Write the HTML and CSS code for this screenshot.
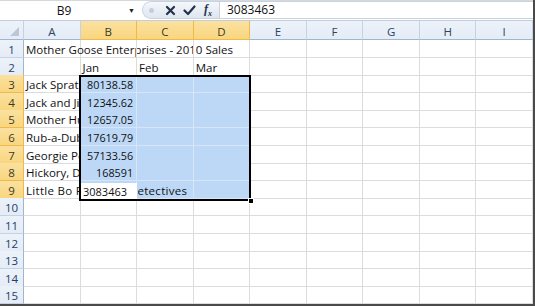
FILE: index.html
```html
<!DOCTYPE html>
<html lang="en">
<head>
    <meta charset="utf-8">
    <title>Mother Goose Enterprises - 2010 Sales</title>
    <link rel="stylesheet" href="styles.css">
</head>
<body>
    <div class="window">
        <div class="formula-bar">
            <div class="name-box">
                <span class="name">B9</span>
                <span class="drop">&#9660;</span>
            </div>
            <div class="fx-buttons">
                <span class="grip"></span>
                <svg class="btn-icon" width="11" height="11" viewBox="0 0 11 11">
                    <path d="M2 2 L9 9 M9 2 L2 9" stroke="#23324d" stroke-width="2.2" stroke-linecap="round"/>
                </svg>
                <svg class="btn-icon" width="13" height="11" viewBox="0 0 13 11">
                    <path d="M1.5 5.5 L5 9 L11.5 1.5" stroke="#23324d" stroke-width="2.2" fill="none" stroke-linecap="round" stroke-linejoin="round"/>
                </svg>
                <span class="fx">f<sub>x</sub></span>
            </div>
            <div class="formula-input">3083463</div>
        </div>

        <div class="sheet">
            <div class="row head-row">
                <div class="corner"><span class="corner-tri"></span></div>
                <div class="col-head">A</div>
                <div class="col-head active">B</div>
                <div class="col-head active">C</div>
                <div class="col-head active">D</div>
                <div class="col-head">E</div>
                <div class="col-head">F</div>
                <div class="col-head">G</div>
                <div class="col-head">H</div>
                <div class="col-head">I</div>
            </div>

            <div class="row">
                <div class="row-head">1</div>
                <div class="cell spill">Mother Goose Enterprises - 2010 Sales</div>
                <div class="cell"></div><div class="cell"></div><div class="cell"></div>
                <div class="cell"></div><div class="cell"></div><div class="cell"></div><div class="cell"></div><div class="cell"></div>
            </div>
            <div class="row">
                <div class="row-head">2</div>
                <div class="cell"></div>
                <div class="cell">Jan</div>
                <div class="cell">Feb</div>
                <div class="cell">Mar</div>
                <div class="cell"></div><div class="cell"></div><div class="cell"></div><div class="cell"></div><div class="cell"></div>
            </div>
            <div class="row">
                <div class="row-head active">3</div>
                <div class="cell">Jack Sprat Diet Centers</div>
                <div class="cell sel num">80138.58</div>
                <div class="cell sel"></div><div class="cell sel"></div>
                <div class="cell"></div><div class="cell"></div><div class="cell"></div><div class="cell"></div><div class="cell"></div>
            </div>
            <div class="row">
                <div class="row-head active">4</div>
                <div class="cell">Jack and Jill Trauma Centers</div>
                <div class="cell sel num">12345.62</div>
                <div class="cell sel"></div><div class="cell sel"></div>
                <div class="cell"></div><div class="cell"></div><div class="cell"></div><div class="cell"></div><div class="cell"></div>
            </div>
            <div class="row">
                <div class="row-head active">5</div>
                <div class="cell">Mother Hubbard Dog Goodies</div>
                <div class="cell sel num">12657.05</div>
                <div class="cell sel"></div><div class="cell sel"></div>
                <div class="cell"></div><div class="cell"></div><div class="cell"></div><div class="cell"></div><div class="cell"></div>
            </div>
            <div class="row">
                <div class="row-head active">6</div>
                <div class="cell">Rub-a-Dub-Dub Hot Tubs and Spas</div>
                <div class="cell sel num">17619.79</div>
                <div class="cell sel"></div><div class="cell sel"></div>
                <div class="cell"></div><div class="cell"></div><div class="cell"></div><div class="cell"></div><div class="cell"></div>
            </div>
            <div class="row">
                <div class="row-head active">7</div>
                <div class="cell">Georgie Porgie Pudding Pies</div>
                <div class="cell sel num">57133.56</div>
                <div class="cell sel"></div><div class="cell sel"></div>
                <div class="cell"></div><div class="cell"></div><div class="cell"></div><div class="cell"></div><div class="cell"></div>
            </div>
            <div class="row">
                <div class="row-head active">8</div>
                <div class="cell">Hickory, Dickory, Dock Clock Repair</div>
                <div class="cell sel num">168591</div>
                <div class="cell sel"></div><div class="cell sel"></div>
                <div class="cell"></div><div class="cell"></div><div class="cell"></div><div class="cell"></div><div class="cell"></div>
            </div>
            <div class="row">
                <div class="row-head active">9</div>
                <div class="cell spill"><span class="over">Little Bo Peep Pet Detectives</span></div>
                <div class="cell sel"></div>
                <div class="cell sel"></div><div class="cell sel"></div>
                <div class="cell"></div><div class="cell"></div><div class="cell"></div><div class="cell"></div><div class="cell"></div>
            </div>
            <div class="row">
                <div class="row-head">10</div>
                <div class="cell"></div><div class="cell"></div><div class="cell"></div><div class="cell"></div>
                <div class="cell"></div><div class="cell"></div><div class="cell"></div><div class="cell"></div><div class="cell"></div>
            </div>
            <div class="row">
                <div class="row-head">11</div>
                <div class="cell"></div><div class="cell"></div><div class="cell"></div><div class="cell"></div>
                <div class="cell"></div><div class="cell"></div><div class="cell"></div><div class="cell"></div><div class="cell"></div>
            </div>
            <div class="row">
                <div class="row-head">12</div>
                <div class="cell"></div><div class="cell"></div><div class="cell"></div><div class="cell"></div>
                <div class="cell"></div><div class="cell"></div><div class="cell"></div><div class="cell"></div><div class="cell"></div>
            </div>
            <div class="row">
                <div class="row-head">13</div>
                <div class="cell"></div><div class="cell"></div><div class="cell"></div><div class="cell"></div>
                <div class="cell"></div><div class="cell"></div><div class="cell"></div><div class="cell"></div><div class="cell"></div>
            </div>
            <div class="row">
                <div class="row-head">14</div>
                <div class="cell"></div><div class="cell"></div><div class="cell"></div><div class="cell"></div>
                <div class="cell"></div><div class="cell"></div><div class="cell"></div><div class="cell"></div><div class="cell"></div>
            </div>
            <div class="row">
                <div class="row-head">15</div>
                <div class="cell"></div><div class="cell"></div><div class="cell"></div><div class="cell"></div>
                <div class="cell"></div><div class="cell"></div><div class="cell"></div><div class="cell"></div><div class="cell"></div>
            </div>

            <!-- selection B3:D9 and the in-cell editor for B9 -->
            <div class="selection"><span class="fill-handle"></span></div>
            <div class="editor">3083463</div>
        </div>
    </div>
</body>
</html>
```

FILE: styles.css
```css
:root {
    --grid-line: #dadcdd;
    --head-bg: #e4ecf7;
    --head-line: #c5d2e3;
    --head-text: #2a4466;
    --active-bg: #f9d67f;
    --active-line: #f0b94c;
    --sel-bg: #bcd8f6;
}

* {
    box-sizing: border-box;
    margin: 0;
    padding: 0;
}

body {
    font-family: "Open Sans", "Liberation Sans", sans-serif;
    font-size: 11.5px;
    color: #111;
    background: #fff;
}

.window {
    width: 535px;
    height: 306px;
    overflow: hidden;
    border-right: 2px solid #4a4a4a;
    border-bottom: 2px solid #4a4a4a;
}

/* Formula bar */
.formula-bar {
    display: flex;
    height: 20px;
    border-top: 1px solid #d4d9e0;
    background: #fff;
}

.name-box {
    width: 140px;
    display: flex;
    align-items: center;
}

.name-box .name {
    flex: 1;
    text-align: center;
    font-size: 12px;
}

.name-box .drop {
    font-size: 7px;
    color: #222;
    margin-right: 5px;
}

.fx-buttons {
    width: 77px;
    height: 18px;
    margin-left: 2px;
    display: flex;
    align-items: center;
    gap: 7px;
    padding-left: 6px;
    border: 1px solid #c9d3e0;
    border-right: none;
    border-radius: 9px 0 0 9px;
    background: linear-gradient(#f4f7fb, #dfe6f0);
}

.grip {
    width: 5px;
    height: 5px;
    border-radius: 50%;
    background: #c3cedb;
    margin-right: 4px;
}

.fx {
    font-family: "Liberation Serif", serif;
    font-style: italic;
    font-weight: bold;
    font-size: 12px;
    color: #23324d;
    margin-left: 1px;
}

.fx sub {
    font-size: 8px;
}

.formula-input {
    flex: 1;
    height: 18px;
    border: 1px solid #c9d3e0;
    border-right: none;
    padding-left: 7px;
    line-height: 16px;
    font-size: 12px;
}

/* Sheet grid */
.sheet {
    position: relative;
    border-top: 1px solid #c3cddb;
}

.row {
    display: grid;
    grid-template-columns: 24px repeat(9, minmax(0, 1fr));
    height: 17.6px;
}

.head-row {
    height: 19px;
}

.corner,
.col-head,
.row-head {
    background: linear-gradient(#edf2f9, var(--head-bg));
    color: var(--head-text);
    border-right: 1px solid var(--head-line);
    border-bottom: 1px solid var(--head-line);
    text-align: center;
}

.corner {
    position: relative;
    border-bottom-color: #9eb6ce;
}

.corner-tri {
    position: absolute;
    right: 4px;
    bottom: 3px;
    border-left: 9px solid transparent;
    border-bottom: 9px solid #bdc7d3;
}

.col-head {
    padding-top: 3px;
    line-height: 15px;
    border-bottom-color: #9eb6ce;
}

.row-head {
    padding-top: 2px;
    line-height: 15px;
    font-size: 11.5px;
    border-right-color: #9eb6ce;
    color: #24406a;
}

.col-head.active,
.row-head.active {
    background: linear-gradient(#fbe1a0, var(--active-bg));
    border-color: var(--active-line);
    color: #3b3a2a;
}

.cell {
    border-right: 1px solid var(--grid-line);
    border-bottom: 1px solid var(--grid-line);
    padding: 2px 2px 0;
    line-height: 15px;
    white-space: nowrap;
    overflow: hidden;
}

.cell.spill {
    overflow: visible;
}

.cell.sel {
    background: var(--sel-bg);
    border-color: #d6e6f8;
}

.cell.num {
    text-align: right;
    padding-right: 3px;
    font-size: 10.8px;
}

.over {
    position: relative;
    z-index: 1;
    letter-spacing: 0.3px;
}

.selection {
    position: absolute;
    left: 79px;
    top: 54px;
    width: 172px;
    height: 126px;
    border: 2px solid #000;
    z-index: 2;
}

.fill-handle {
    position: absolute;
    right: -5px;
    bottom: -5px;
    width: 6px;
    height: 6px;
    background: #000;
    border: 1px solid #fff;
}

.editor {
    position: absolute;
    left: 81px;
    top: 162px;
    width: 56px;
    height: 16px;
    background: #fff;
    padding: 1px 0 0 2px;
    line-height: 15px;
    font-size: 11px;
    z-index: 3;
}
```
